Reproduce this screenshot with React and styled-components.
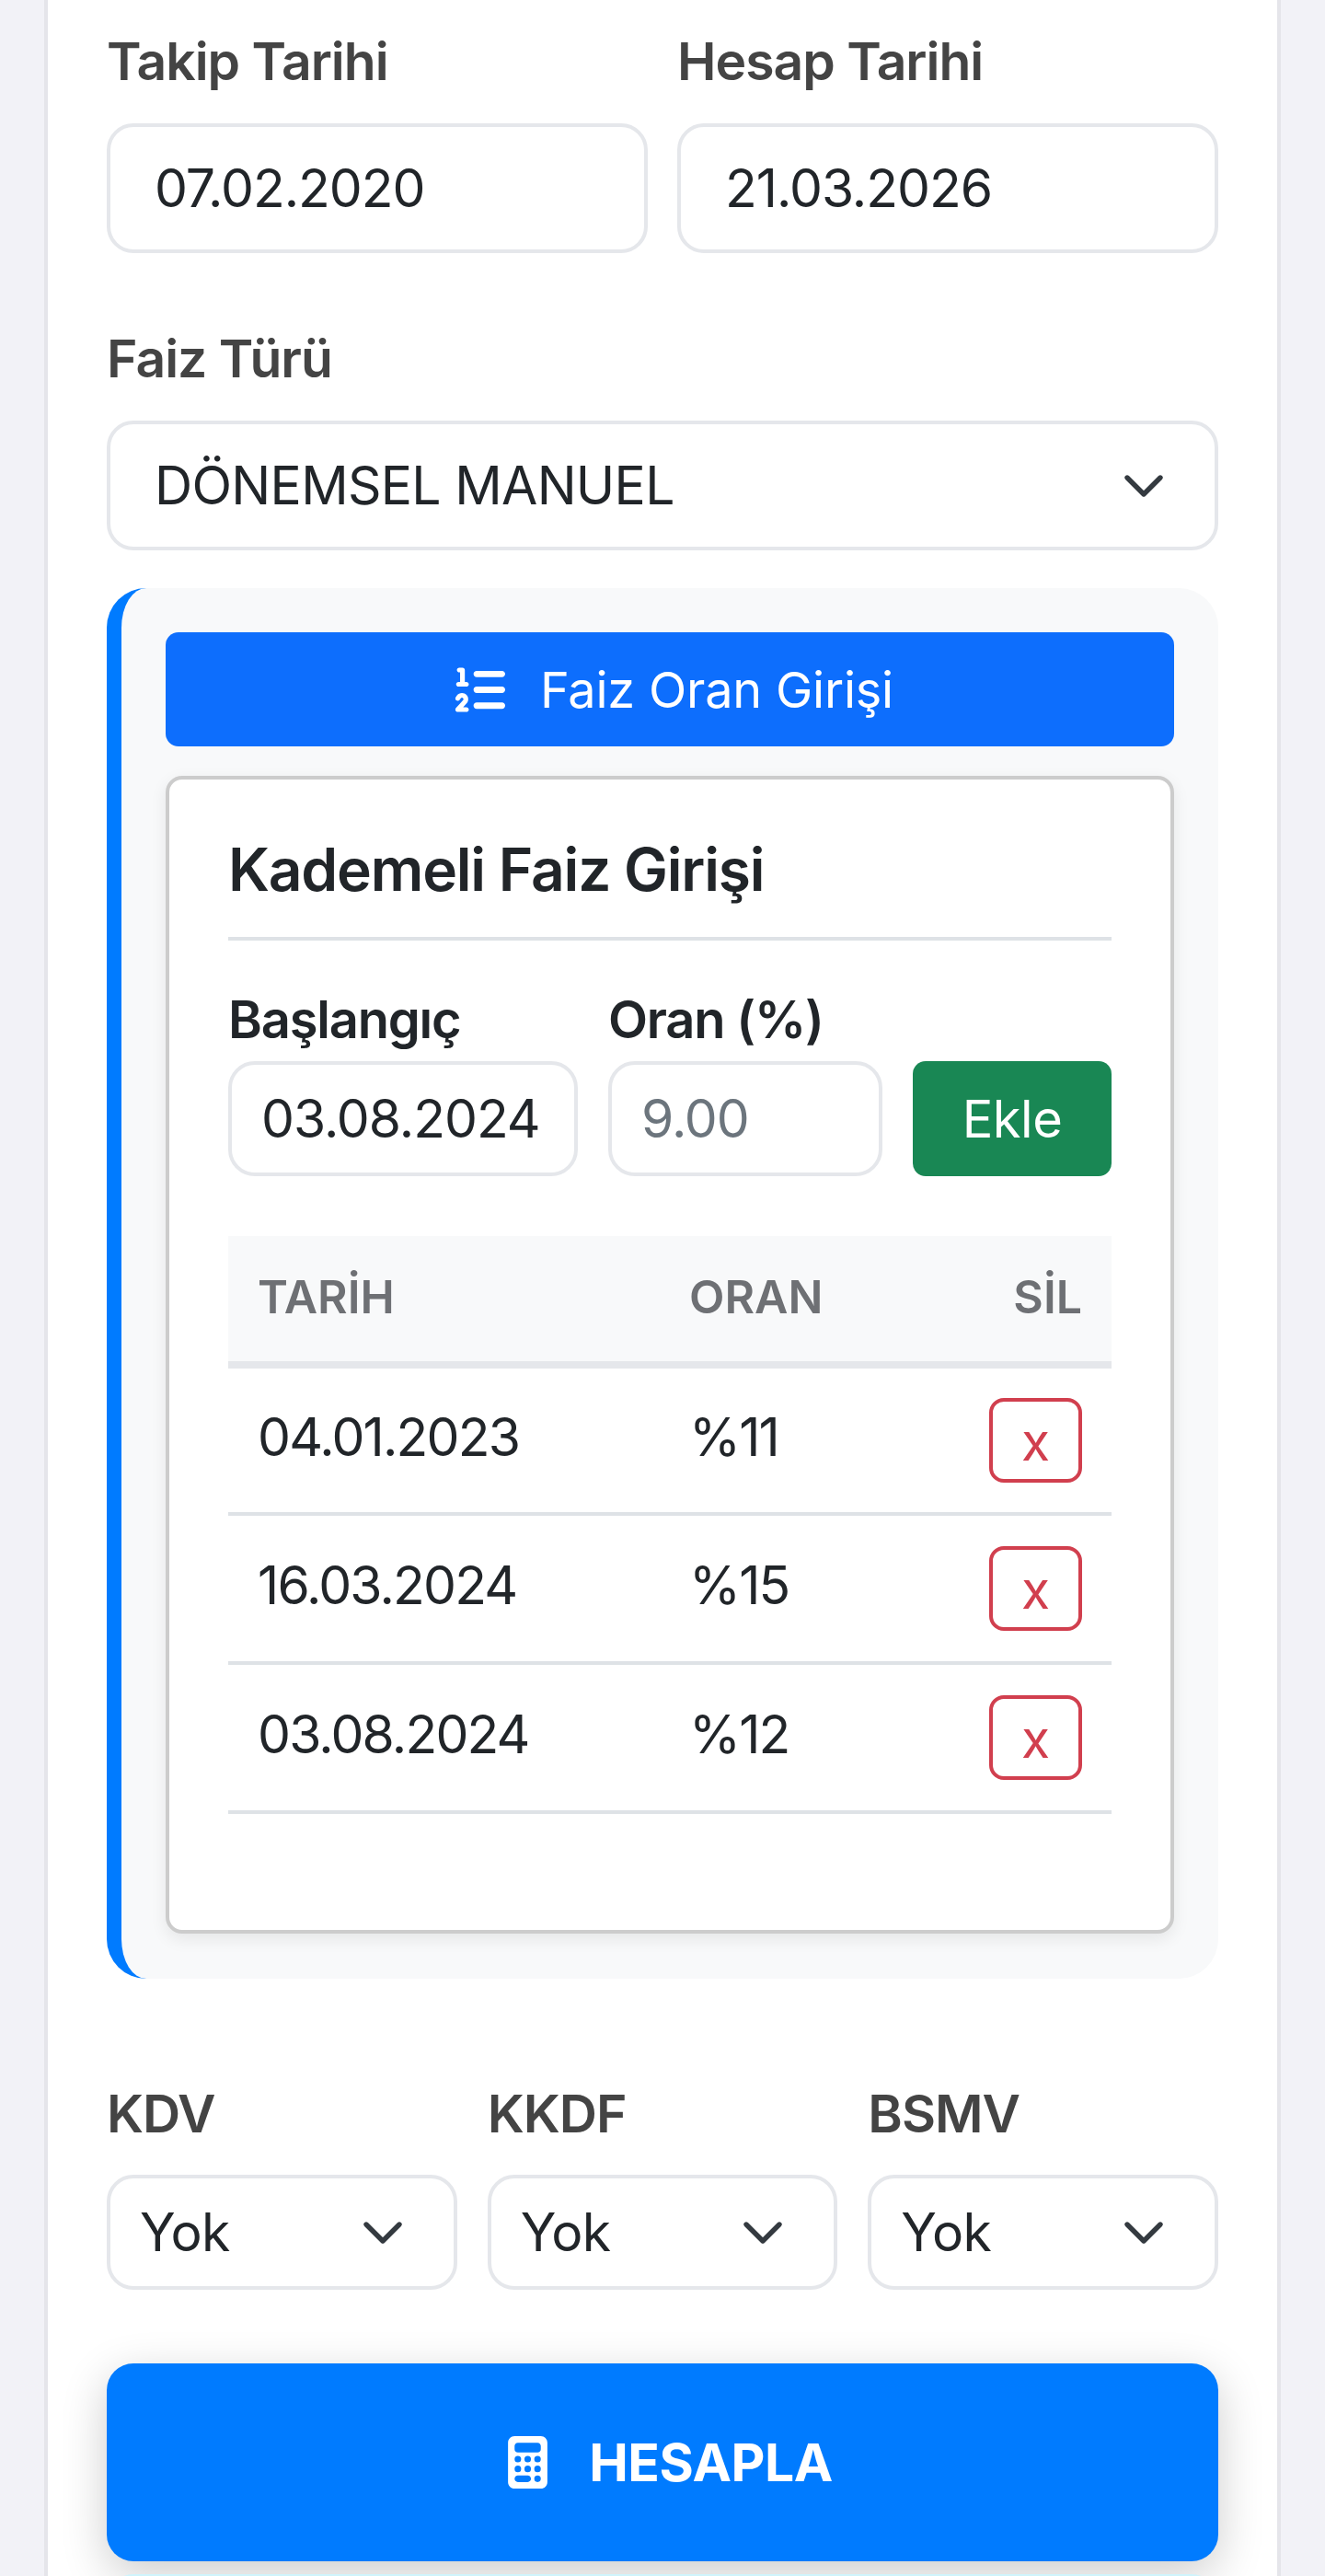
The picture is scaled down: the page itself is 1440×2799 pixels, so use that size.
import React from 'react';
import styled, { createGlobalStyle } from 'styled-components';
import { FaListOl, FaCalculator } from 'react-icons/fa6';

const GlobalStyle = createGlobalStyle`
    * {
        box-sizing: border-box;
    }
    body {
        margin: 0;
        background-color: #f2f2f7;
        font-family: Inter, "Noto Sans", sans-serif;
    }
`;

const rates = [
    { date: '04.01.2023', rate: '%11' },
    { date: '16.03.2024', rate: '%15' },
    { date: '03.08.2024', rate: '%12' },
];

function Select({ value, small }) {
    return (
        <SelectWrap>
            <SelectField small={small} defaultValue={value}>
                <option>{value}</option>
            </SelectField>
            <Chevron viewBox="0 0 16 16" fill="none" stroke="#343a40" strokeWidth="1.8" strokeLinecap="round" strokeLinejoin="round">
                <path d="m2 5 6 6 6-6" />
            </Chevron>
        </SelectWrap>
    );
}

function App() {
    return (
        <Page>
            <GlobalStyle />
            <Card>
                <TwoCols>
                    <div>
                        <Label>Takip Tarihi</Label>
                        <Input readOnly value="07.02.2020" />
                    </div>
                    <div>
                        <Label>Hesap Tarihi</Label>
                        <Input readOnly value="21.03.2026" />
                    </div>
                </TwoCols>

                <TypeField>
                    <Label>Faiz Türü</Label>
                    <Select value="DÖNEMSEL MANUEL" />
                </TypeField>

                <Panel>
                    <RateButton>
                        <FaListOl />
                        Faiz Oran Girişi
                    </RateButton>
                    <InnerCard>
                        <Title>Kademeli Faiz Girişi</Title>
                        <RateForm>
                            <div>
                                <SmallLabel>Başlangıç</SmallLabel>
                                <SmallInput readOnly value="03.08.2024" />
                            </div>
                            <div>
                                <SmallLabel>Oran (%)</SmallLabel>
                                <SmallInput readOnly placeholder="9.00" />
                            </div>
                            <AddButton>Ekle</AddButton>
                        </RateForm>
                        <RateTable>
                            <thead>
                                <tr>
                                    <th>TARİH</th>
                                    <th>ORAN</th>
                                    <th>SİL</th>
                                </tr>
                            </thead>
                            <tbody>
                                {rates.map((r) => (
                                    <tr key={r.date}>
                                        <td>{r.date}</td>
                                        <td>{r.rate}</td>
                                        <td>
                                            <DeleteButton>x</DeleteButton>
                                        </td>
                                    </tr>
                                ))}
                            </tbody>
                        </RateTable>
                    </InnerCard>
                </Panel>

                <TaxRow>
                    <div>
                        <Label>KDV</Label>
                        <Select small value="Yok" />
                    </div>
                    <div>
                        <Label>KKDF</Label>
                        <Select small value="Yok" />
                    </div>
                    <div>
                        <Label>BSMV</Label>
                        <Select small value="Yok" />
                    </div>
                </TaxRow>

                <SubmitButton>
                    <FaCalculator />
                    HESAPLA
                </SubmitButton>
                <ResultBox />
            </Card>
        </Page>
    );
}
export default App;

const Page = styled.div`
    height: 2799px;
    padding: 0 48px;
    overflow: hidden;
`;

const Card = styled.div`
    height: 100%;
    padding: 0 64px;
    background-color: #fff;
    border-left: 4px solid #e5e5ea;
    border-right: 4px solid #e5e5ea;
`;

const TwoCols = styled.div`
    display: grid;
    grid-template-columns: 1fr 1fr;
    gap: 32px;
`;

const Label = styled.label`
    display: block;
    padding-top: 32px;
    height: 134px;
    font-size: 57px;
    line-height: 70px;
    font-weight: 600;
    letter-spacing: -1px;
    color: #444;
`;

const Input = styled.input`
    display: block;
    width: 100%;
    height: 141px;
    padding: 0 48px;
    background-color: #fff;
    border: 4px solid #e5e7eb;
    border-radius: 29px;
    font-family: inherit;
    font-size: 57px;
    letter-spacing: -1px;
    color: #212529;
    &:focus {
        outline: none;
    }
    &::placeholder {
        color: #6c757d;
    }
`;

const TypeField = styled.div`
    margin-top: 48px;
`;

const SelectWrap = styled.div`
    position: relative;
`;

const SelectField = styled.select`
    display: block;
    width: 100%;
    height: ${({ small }) => (small ? '125px' : '141px')};
    padding: 0 ${({ small }) => (small ? '32px' : '48px')};
    appearance: none;
    background-color: #fff;
    border: 4px solid #e5e7eb;
    border-radius: 29px;
    font-family: inherit;
    font-size: 57px;
    letter-spacing: -0.7px;
    color: #212529;
`;

const Chevron = styled.svg`
    position: absolute;
    top: 50%;
    right: 57px;
    width: 48px;
    height: 48px;
    transform: translateY(-50%);
    pointer-events: none;
`;

const Panel = styled.div`
    margin-top: 41px;
    padding: 48px 48px 49px 48px;
    background-color: #f8f9fa;
    border-left: 16px solid #007bff;
    border-radius: 43px;
`;

const RateButton = styled.button`
    display: flex;
    align-items: center;
    justify-content: center;
    gap: 38px;
    width: 100%;
    height: 124px;
    padding-left: 15px;
    background-color: #0d6efd;
    border: none;
    border-radius: 14px;
    font-family: inherit;
    font-size: 54px;
    letter-spacing: -0.2px;
    color: #fff;
    svg {
        width: 55px;
        height: 55px;
    }
`;

const InnerCard = styled.div`
    height: 1258px;
    margin-top: 32px;
    padding: 0 64px;
    background-color: #fff;
    border: 4px solid #ccc;
    border-radius: 18px;
    box-shadow: 0 6px 18px rgba(0, 0, 0, 0.08);
`;

const Title = styled.h5`
    margin: 0;
    height: 175px;
    padding-top: 60px;
    border-bottom: 4px solid #dee2e6;
    font-size: 64px;
    line-height: 75px;
    font-weight: 600;
    letter-spacing: -1.2px;
    color: #212529;
`;

const RateForm = styled.div`
    display: grid;
    grid-template-columns: 380px 298px 1fr;
    gap: 33px;
    align-items: end;
    margin-top: 56px;
`;

const SmallLabel = styled.label`
    display: block;
    height: 75px;
    font-size: 56px;
    line-height: 60px;
    font-weight: 600;
    letter-spacing: -1.2px;
    color: #212529;
`;

const SmallInput = styled(Input)`
    height: 125px;
    padding: 0 32px;
`;

const AddButton = styled.button`
    height: 125px;
    background-color: #198754;
    border: none;
    border-radius: 14px;
    font-family: inherit;
    font-size: 56px;
    letter-spacing: -0.5px;
    color: #fff;
`;

const RateTable = styled.table`
    width: 100%;
    margin-top: 65px;
    border-collapse: collapse;
    th {
        height: 140px;
        padding: 0 32px 4px;
        background-color: #f8f9fa;
        border-bottom: 8px solid #e5e7eb;
        text-align: left;
        font-size: 50px;
        font-weight: 600;
        color: #6e7074;
    }
    th:first-child {
        width: 469px;
    }
    td {
        height: 162px;
        padding: 0 32px 8px;
        border-bottom: 4px solid #dee2e6;
        font-size: 57px;
        letter-spacing: -1.8px;
        color: #212529;
    }
    th:last-child,
    td:last-child {
        text-align: right;
    }
    td:last-child {
        padding-bottom: 0;
    }
`;

const DeleteButton = styled.button`
    width: 101px;
    height: 92px;
    padding: 2px 0 0;
    background-color: #fff;
    border: 4px solid #d13f4e;
    border-radius: 16px;
    font-family: inherit;
    font-size: 57px;
    line-height: 1;
    color: #d13f4e;
`;

const TaxRow = styled.div`
    display: grid;
    grid-template-columns: repeat(3, 1fr);
    gap: 33px;
    margin-top: 80px;
    ${Label} {
        height: 133px;
    }
`;

const SubmitButton = styled.button`
    display: flex;
    align-items: center;
    justify-content: center;
    gap: 45px;
    width: 100%;
    height: 215px;
    margin-top: 80px;
    padding-left: 23px;
    background-color: #007bff;
    border: none;
    border-radius: 29px;
    box-shadow: 0 14px 50px rgba(0, 0, 0, 0.2);
    font-family: inherit;
    font-size: 57px;
    font-weight: 700;
    letter-spacing: -0.5px;
    color: #fff;
    svg {
        width: 43px;
        height: 57px;
    }
`;

const ResultBox = styled.div`
    height: 100px;
    margin-top: 14px;
    background-color: #cff4fc;
    border-radius: 29px;
`;
